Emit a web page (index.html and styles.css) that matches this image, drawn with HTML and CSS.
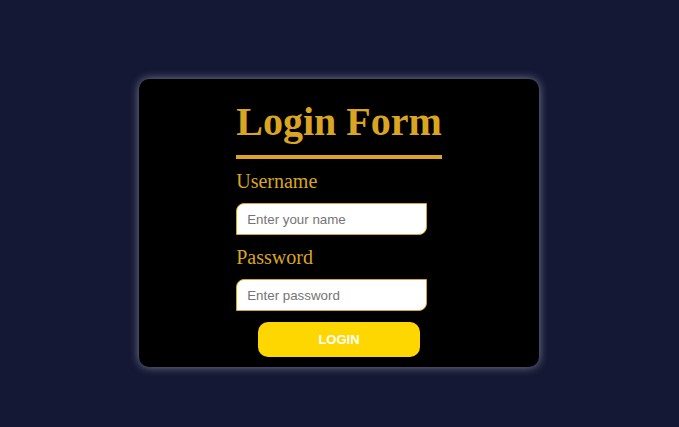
FILE: index.html
```html
<!DOCTYPE html>
<html>
<head>
<meta charset="utf-8">
<link rel="stylesheet" href="styles.css">
</head>
<body>
<div class="card">
  <form class="form">
    <h1 class="title">Login Form</h1>
    <label class="label" for="u">Username</label>
    <input class="field" id="u" type="text" placeholder="Enter your name">
    <label class="label" for="p">Password</label>
    <input class="field" id="p" type="password" placeholder="Enter password">
    <button class="btn" type="button">LOGIN</button>
  </form>
</div>
</body>
</html>
```
FILE: styles.css
```css
html, body {
  margin: 0;
  padding: 0;
}
body {
  background: #151834;
  min-height: 100vh;
  padding-top: 79px;
  box-sizing: border-box;
  font-family: "Liberation Serif", "Times New Roman", serif;
}
.card {
  width: 400px;
  margin: 0 auto 0 139px;
  background: #000;
  border-radius: 10px;
  box-shadow: 0 0 10px rgba(210, 210, 230, 0.55);
  padding: 20px 0 10px;
  box-sizing: border-box;
  display: flex;
  justify-content: center;
}
.form {
  display: flex;
  flex-direction: column;
  align-items: flex-start;
  width: max-content;
  margin: 0;
}
.title {
  margin: 0;
  font-size: 40px;
  line-height: 46px;
  font-weight: bold;
  color: #daa520;
  padding-bottom: 10px;
  border-bottom: 4px solid #daa520;
  align-self: stretch;
}
.label {
  font-size: 20px;
  line-height: 23px;
  color: #daa520;
  margin-top: 11px;
}
.field {
  margin-top: 10px;
  width: 191px;
  height: 32px;
  box-sizing: border-box;
  border: 1px solid #daa520;
  border-radius: 8px 0 8px 0;
  background: #fff;
  padding: 0 10px;
  font-family: "Liberation Sans", Arial, sans-serif;
  font-size: 13.33px;
  color: #333;
  outline: none;
}
.field::placeholder {
  color: #757575;
}
.btn {
  margin-top: 11px;
  align-self: center;
  width: 162px;
  height: 35px;
  border: none;
  border-radius: 10px;
  background: #ffd700;
  color: #fff;
  font-family: "Liberation Sans", Arial, sans-serif;
  font-weight: bold;
  font-size: 13px;
  cursor: pointer;
}
```
